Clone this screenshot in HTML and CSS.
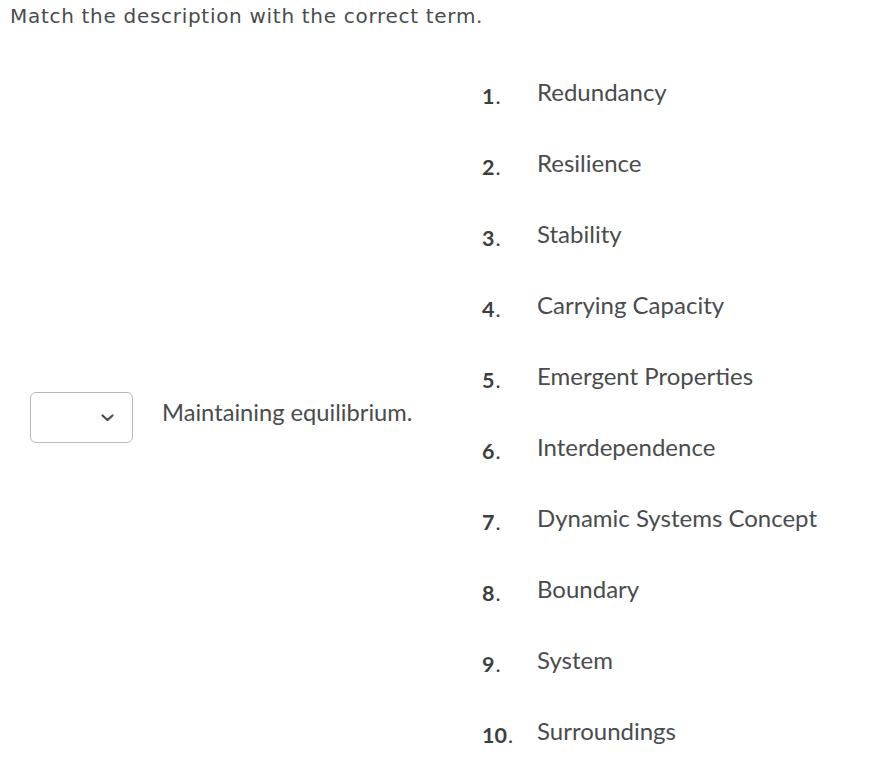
FILE: index.html
```html
<!DOCTYPE html>
<html>
<head>
<meta charset="utf-8">
<link rel="stylesheet" href="styles.css">
</head>
<body>
<p class="prompt">Match the description with the correct term.</p>
<div class="match">
  <div class="question">
    <div class="select">
      <svg class="chev" width="13" height="8" viewBox="0 0 13 8"><path d="M1.5 1.5 L6.5 6 L11.5 1.5" fill="none" stroke="#494c4e" stroke-width="2.2" stroke-linecap="round" stroke-linejoin="round"/></svg>
    </div>
    <span class="desc">Maintaining equilibrium.</span>
  </div>
  <ol class="terms">
    <li><span class="num">1<span class="dot">.</span></span><span class="term">Redundancy</span></li>
    <li><span class="num">2<span class="dot">.</span></span><span class="term">Resilience</span></li>
    <li><span class="num">3<span class="dot">.</span></span><span class="term">Stability</span></li>
    <li><span class="num">4<span class="dot">.</span></span><span class="term">Carrying Capacity</span></li>
    <li><span class="num">5<span class="dot">.</span></span><span class="term">Emergent Properties</span></li>
    <li><span class="num">6<span class="dot">.</span></span><span class="term">Interdependence</span></li>
    <li><span class="num">7<span class="dot">.</span></span><span class="term">Dynamic Systems Concept</span></li>
    <li><span class="num">8<span class="dot">.</span></span><span class="term">Boundary</span></li>
    <li><span class="num">9<span class="dot">.</span></span><span class="term">System</span></li>
    <li><span class="num">10<span class="dot">.</span></span><span class="term">Surroundings</span></li>
  </ol>
</div>
</body>
</html>
```
FILE: styles.css
```css
html, body {
  margin: 0;
  padding: 0;
  background: #ffffff;
}
body {
  color: #494c4e;
  font-family: Lato, "Noto Sans", sans-serif;
}
.prompt {
  margin: 0;
  padding: 3px 0 0 10px;
  font-family: "DejaVu Sans", Verdana, sans-serif;
  font-size: 20px;
  letter-spacing: 0.7px;
  line-height: 26px;
  color: #494c4e;
}
.match {
  display: flex;
  align-items: center;
  padding-top: 42px;
}
.question {
  display: flex;
  align-items: center;
  width: 482px;
  padding-left: 30px;
  box-sizing: border-box;
}
.select {
  width: 103px;
  height: 51px;
  box-sizing: border-box;
  border: 1px solid #b6b9bc;
  border-radius: 6px;
  display: flex;
  align-items: center;
  justify-content: flex-end;
  padding-right: 18px;
  position: relative;
  top: 6px;
}
.chev { display: block; }
.desc {
  margin-left: 29px;
  font-size: 23.7px;
  line-height: 28px;
}
.terms {
  list-style: none;
  margin: 0;
  padding: 0;
}
.terms li {
  display: flex;
  align-items: baseline;
  height: 71px;
  line-height: 42px;
}
.terms li:last-child {
  height: 42px;
}
.num {
  width: 55px;
  font-weight: bold;
  font-size: 21.5px;
  color: #3c3f41;
  position: relative;
  top: 3px;
}
.dot {
  font-weight: normal;
  margin-left: 1px;
}
.term {
  font-size: 24px;
}
```
